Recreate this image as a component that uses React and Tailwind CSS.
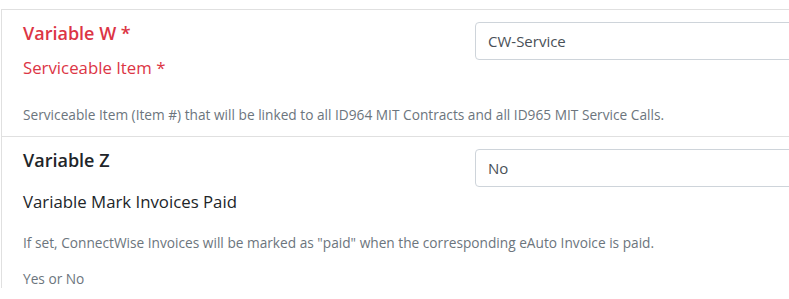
import React from "react";

const font = { fontFamily: '"Open Sans", "Noto Sans", sans-serif' };

const Field = ({ title, titleClass, label, labelClass, value }) => (
  <div className="flex">
    <div className="w-[452px] shrink-0">
      <div className={`text-[18px] font-semibold leading-[22px] ${titleClass}`}>{title}</div>
      <div className={`text-[16.8px] leading-[20px] ${labelClass}`}>{label}</div>
    </div>
    <div className="flex-1">
      <div className="h-[38px] w-[400px] rounded-[4px] border border-[#ced4da] bg-white px-[12px] text-[15px] leading-[36px] text-[#495057]">
        {value}
      </div>
    </div>
  </div>
);

export default function App() {
  return (
    <div className="h-[299px] w-[789px] overflow-hidden bg-white pt-[9px]" style={font}>
      <div className="ml-[1px] w-[900px] border-l border-t border-[#e0e0e0]">
        <div className="h-[127px] border-b border-[#e0e0e0] pl-[21px] pt-[12px]">
          <Field
            title="Variable W *"
            titleClass="text-[#dc3545]"
            label={<span className="mt-[14px] block">Serviceable Item *</span>}
            labelClass="text-[#dc3545]"
            value="CW-Service"
          />
          <p className="mt-[28px] text-[13.7px] leading-[18px] text-[#6c757d]">
            Serviceable Item (Item #) that will be linked to all ID964 MIT Contracts and all ID965 MIT Service Calls.
          </p>
        </div>
        <div className="pl-[21px] pt-[12px]">
          <Field
            title="Variable Z"
            titleClass="text-[#212529]"
            label={<span className="mt-[21px] block">Variable Mark Invoices Paid</span>}
            labelClass="text-[#212529]"
            value="No"
          />
          <p className="mt-[22px] text-[13.7px] leading-[18px] text-[#6c757d]">
            If set, ConnectWise Invoices will be marked as "paid" when the corresponding eAuto Invoice is paid.
          </p>
          <p className="mt-[18px] text-[13.7px] leading-[18px] text-[#6c757d]">Yes or No</p>
        </div>
      </div>
    </div>
  );
}
